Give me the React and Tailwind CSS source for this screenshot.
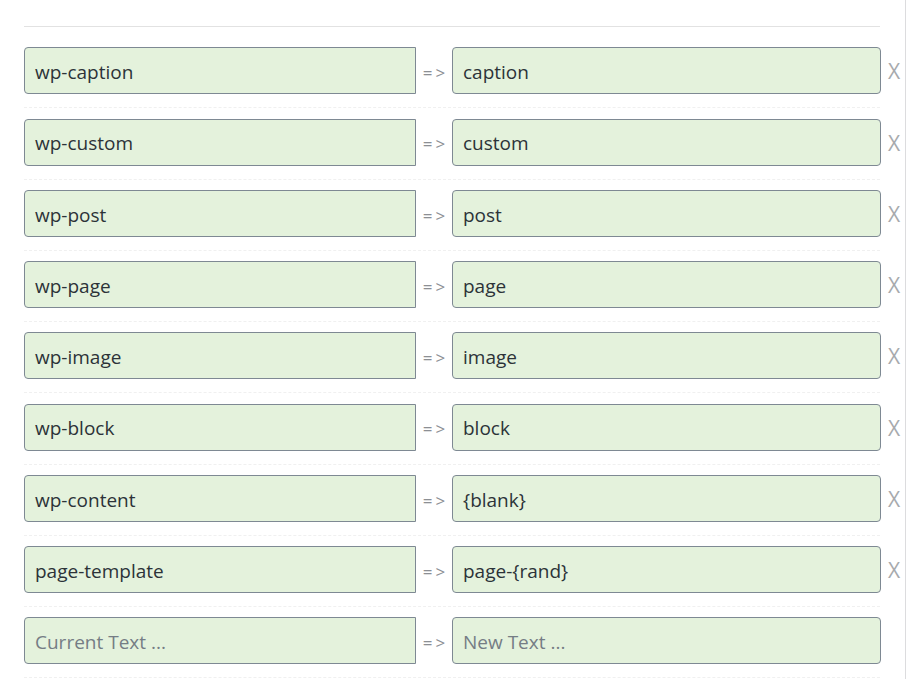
const rows = [
  ["wp-caption", "caption"],
  ["wp-custom", "custom"],
  ["wp-post", "post"],
  ["wp-page", "page"],
  ["wp-image", "image"],
  ["wp-block", "block"],
  ["wp-content", "{blank}"],
  ["page-template", "page-{rand}"],
];

function Field({ value, placeholder, side }) {
  const shape =
    side === "left" ? "w-[392px] rounded-l-[4px]" : "w-[429px] rounded-[4px]";
  return (
    <div
      className={`${shape} h-[47px] flex items-center px-[10px] pt-[3px] bg-[#e4f2dc] border border-[#7e8993] text-[19px] ${
        value ? "text-[#2c3338]" : "text-[#757d85]"
      }`}
    >
      {value || placeholder}
    </div>
  );
}

function Row({ from, to, last }) {
  return (
    <div className="w-[856px] pt-[10.25px] pb-[13px] border-b border-dashed border-[#f0f0f0]">
      <div className="flex items-center w-[882px]">
        <Field side="left" value={from} placeholder="Current Text ..." />
        <div className="w-[36px] text-center text-[17px] text-[#8c8f94] tracking-[3px] pl-[3px] pt-[4px]">
          =&gt;
        </div>
        <Field side="right" value={to} placeholder="New Text ..." />
        {!last && (
          <div className="ml-[7px] pt-[2px] text-[21px] text-[#a7aaad] leading-none">
            X
          </div>
        )}
      </div>
    </div>
  );
}

export default function App() {
  return (
    <div
      className="w-[913px] h-[679px] overflow-hidden bg-white flex"
      style={{ fontFamily: '"Open Sans", "Noto Sans", sans-serif' }}
    >
      <div className="w-[906px] h-full border-r border-[#dcdcde] pl-6">
        <div className="mt-[26px] w-[856px] h-px bg-[#e2e2e2]" />
        <div className="pt-[10px]">
          {rows.map(([a, b]) => (
            <Row key={a} from={a} to={b} />
          ))}
          <Row last />
        </div>
      </div>
    </div>
  );
}
